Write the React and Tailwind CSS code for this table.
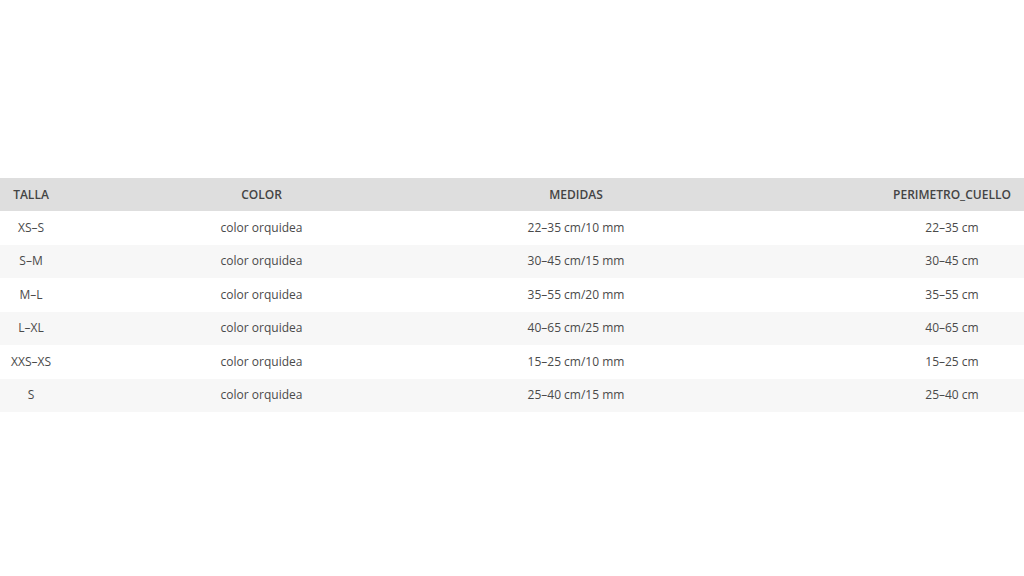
const rows = [
  { talla: "XS–S", color: "color orquidea", medidas: "22–35 cm/10 mm", cuello: "22–35 cm" },
  { talla: "S–M", color: "color orquidea", medidas: "30–45 cm/15 mm", cuello: "30–45 cm" },
  { talla: "M–L", color: "color orquidea", medidas: "35–55 cm/20 mm", cuello: "35–55 cm" },
  { talla: "L–XL", color: "color orquidea", medidas: "40–65 cm/25 mm", cuello: "40–65 cm" },
  { talla: "XXS–XS", color: "color orquidea", medidas: "15–25 cm/10 mm", cuello: "15–25 cm" },
  { talla: "S", color: "color orquidea", medidas: "25–40 cm/15 mm", cuello: "25–40 cm" },
];

function Row({ cells, className }) {
  return (
    <div className={`grid grid-cols-[62px_399px_230px_1fr] items-center ${className}`}>
      <div className="text-center">{cells[0]}</div>
      <div className="text-center">{cells[1]}</div>
      <div className="text-center">{cells[2]}</div>
      <div className="ml-auto w-[144px] text-center">{cells[3]}</div>
    </div>
  );
}

export default function App() {
  return (
    <div className="w-[1024px] h-[576px] bg-white pt-[178px] font-['Open_Sans',sans-serif] text-[12px] text-[#4a4a4a]">
      <Row
        cells={["TALLA", "COLOR", "MEDIDAS", "PERIMETRO_CUELLO"]}
        className="h-[33px] bg-[#dedede] font-semibold text-[#444]"
      />
      {rows.map((r, i) => (
        <Row
          key={i}
          cells={[r.talla, r.color, r.medidas, r.cuello]}
          className={`h-[33.5px] ${i % 2 === 1 ? "bg-[#f7f7f7]" : "bg-white"}`}
        />
      ))}
    </div>
  );
}
